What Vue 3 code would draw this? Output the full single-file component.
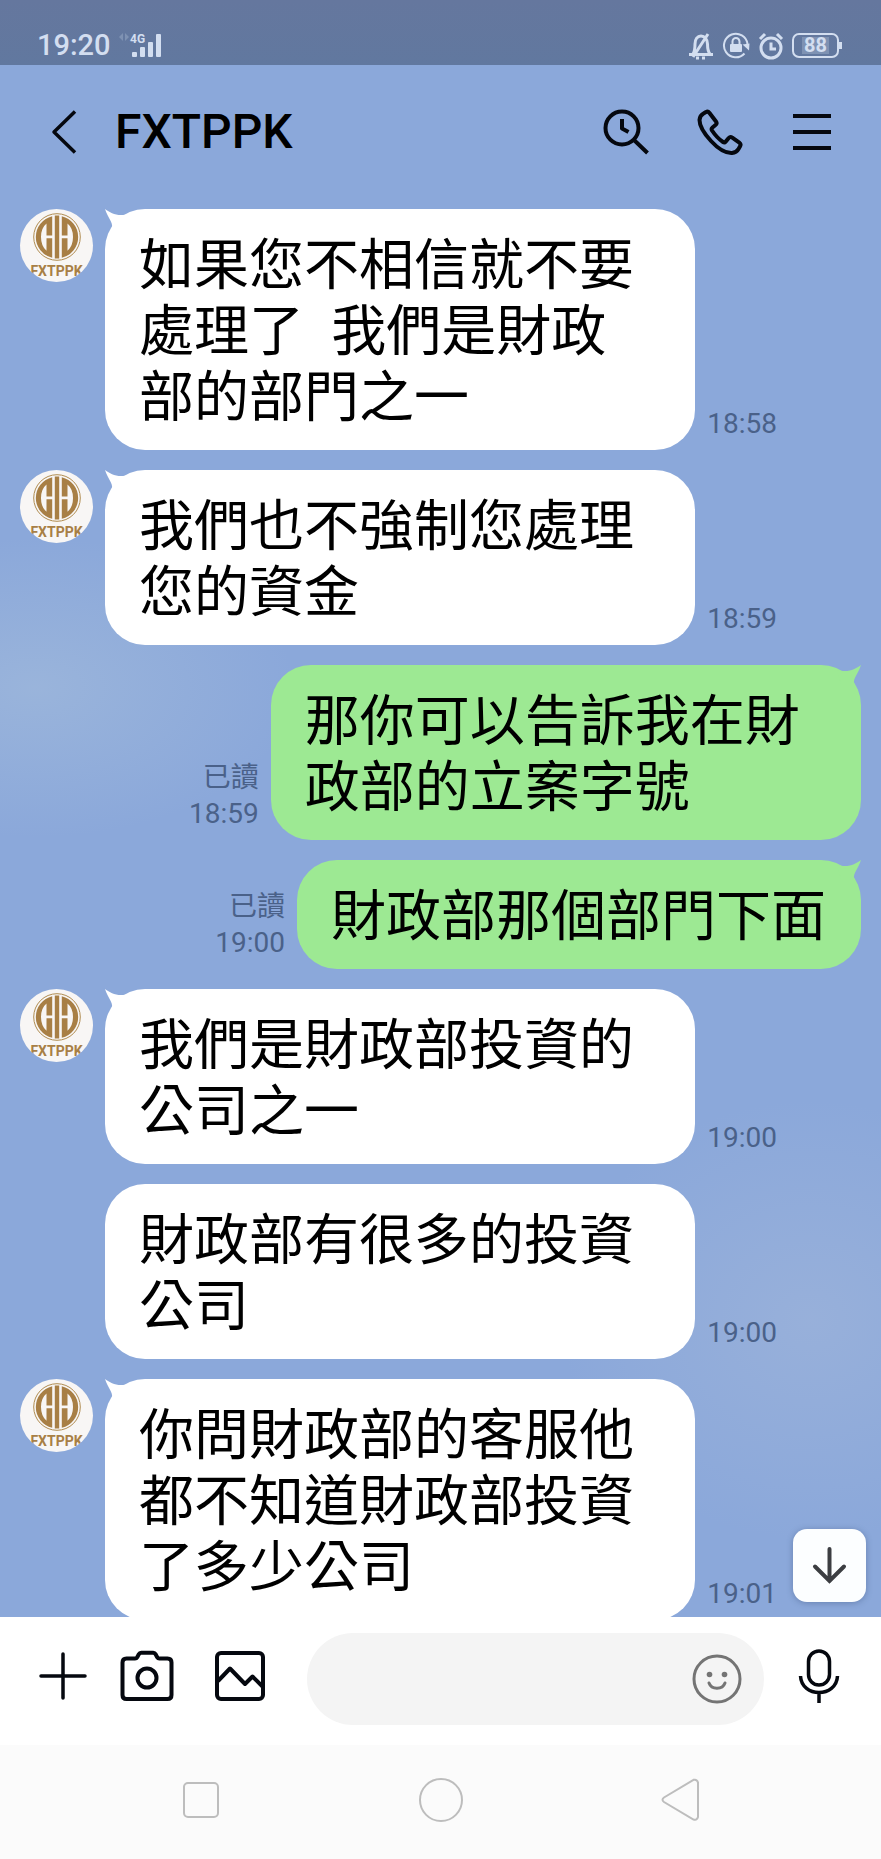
<script setup>
import { ref } from 'vue'

const draft = ref('')

const messages = [
  { id: 1, mine: false, first: true, text: '如果您不相信就不要處理了  我們是財政部的部門之一', time: '18:58' },
  { id: 2, mine: false, first: true, text: '我們也不強制您處理您的資金', time: '18:59' },
  { id: 3, mine: true, first: true, text: '那你可以告訴我在財政部的立案字號', time: '18:59' },
  { id: 4, mine: true, first: true, text: '財政部那個部門下面', time: '19:00' },
  { id: 5, mine: false, first: true, text: '我們是財政部投資的公司之一', time: '19:00' },
  { id: 6, mine: false, first: false, text: '財政部有很多的投資公司', time: '19:00' },
  { id: 7, mine: false, first: true, text: '你問財政部的客服他都不知道財政部投資了多少公司', time: '19:01' }
]
</script>

<template>
  <div class="phone">
    <div class="status">
      <span class="clock">19:20</span>
      <svg class="signal" width="48" height="30" viewBox="0 0 48 30">
        <g class="faint">
          <path d="M4 6l4-4v8zM10 2l4 4-4 4z" />
        </g>
        <text x="15" y="12">4G</text>
        <rect x="17" y="21" width="5" height="5" rx="1" />
        <rect x="25" y="16" width="5" height="10" rx="1" />
        <rect x="33" y="11" width="5" height="15" rx="1" />
        <rect x="41" y="3" width="5" height="23" rx="1" />
      </svg>
      <div class="status-icons">
        <svg width="26" height="28" viewBox="0 0 26 28">
          <path d="M1 22.500h24M5 22c2-3 2-6 2-10 0-5 2.500-8 6-8s6.500 3 6.500 8c0 4 0 7 2.500 10M20 2L5 25" stroke-width="3" />
          <path d="M8 26h3M14 26h3" stroke-width="3" />
        </svg>
        <svg width="28" height="28" viewBox="0 0 28 28">
          <path d="M22.500 21.500A11.800 11.800 0 1 1 25.500 12" />
          <path class="solid" d="M20.500 12.500l7-1-.5 7z" />
          <rect class="solid" x="8" y="12" width="12" height="8" rx="1" />
          <path d="M10.500 12v-2.500a3.500 3.500 0 0 1 7 0V12" />
        </svg>
        <svg width="26" height="28" viewBox="0 0 26 28">
          <circle cx="13" cy="16" r="10" stroke-width="3" />
          <path d="M13 10.500V17h5" stroke-width="3" />
          <path d="M2 7l5-5M24 7l-5-5" stroke-width="3" />
        </svg>
        <span class="battery"><span>88</span></span>
      </div>
    </div>

    <header class="header">
      <button class="icon-btn" aria-label="返回">
        <svg width="48" height="48" viewBox="0 0 48 48">
          <path d="M36 3.500L15 24l21 20.500" stroke-width="3.500" />
        </svg>
      </button>
      <h1>FXTPPK</h1>
      <button class="icon-btn" aria-label="搜尋">
        <svg width="48" height="48" viewBox="0 0 48 48">
          <circle cx="20" cy="20" r="16.500" stroke-width="4" />
          <path d="M20 11v9.500l6.500 3.500M32 32l13.500 13" stroke-width="4" />
        </svg>
      </button>
      <button class="icon-btn" aria-label="通話">
        <svg width="48" height="48" viewBox="0 0 48 48">
          <path
            d="M8.500 5.500L11 4q2-1 3.500 1l6.500 8.500q1.500 2-.5 3.500l-3 2.500q-1.500 1.200-.5 3 5 7.500 11 11.500 1.500 1 2.700-.4l3-3.600q1.600-1.700 3.600-.4l7 5q2 1.500.8 3.600l-1.600 2.800Q41.500 44.500 37 45 27.500 45.500 16 33 4.500 20.500 4.500 12q.3-4.500 4-6.500z"
            stroke-width="4"
          />
        </svg>
      </button>
      <button class="icon-btn" aria-label="選單">
        <svg width="48" height="48" viewBox="0 0 48 48">
          <path d="M5 8h38M5 24h38M5 40h38" stroke-width="4" />
        </svg>
      </button>
    </header>

    <main class="chat">
      <div class="list">
        <div
          v-for="m in messages"
          :key="m.id"
          class="row"
          :class="{ mine: m.mine }"
        >
          <div v-if="!m.mine" class="avatar-slot">
            <div v-if="m.first" class="avatar">
              <svg width="48" height="48" viewBox="-24 -24 48 48">
                <circle r="23.300" fill="none" stroke="#b08c50" stroke-width="1" />
                <rect x="-2.200" y="-21.500" width="4.400" height="43" />
                <path
                  fill-rule="evenodd"
                  d="M-4.800-20.800A21.400 21.400 0 0 0-4.800 20.800V1.200h-5.700v12.500Q-16 9-16 0t5.500-13.500V-1.500h5.700z"
                />
                <path
                  fill-rule="evenodd"
                  d="M4.800-20.800A21.400 21.400 0 0 1 4.800 20.800V1.200h5.700v12.500Q16 9 16 0t-5.500-13.500V-1.500h-5.700z"
                />
              </svg>
              <span>FXTPPK</span>
            </div>
          </div>
          <div class="bubble">
            <svg v-if="m.first" class="tail" width="24" height="20" viewBox="0 0 24 20">
              <path d="M0 0C6 4 12 8 24 5L20 19 7 19C8 13 3 9 0 0z" />
            </svg>
            <p>{{ m.text }}</p>
          </div>
          <div class="meta">
            <span v-if="m.mine">已讀</span>
            <time>{{ m.time }}</time>
          </div>
        </div>
      </div>
      <button class="to-bottom" aria-label="捲到最新訊息">
        <svg width="41" height="41" viewBox="0 0 41 41">
          <path d="M20.500 4v32M6 21.500L20.500 36 35 21.500" />
        </svg>
      </button>
    </main>

    <footer class="composer">
      <button class="icon-btn" aria-label="更多">
        <svg width="52" height="52" viewBox="0 0 52 52">
          <path d="M26 4v44M4 26h44" stroke-width="3.500" stroke-linecap="round" />
        </svg>
      </button>
      <button class="icon-btn" aria-label="相機">
        <svg width="56" height="56" viewBox="0 0 56 56">
          <path
            d="M7.500 10.500H16q1.500 0 2.200-1.300l1.600-3q.8-1.500 2.400-1.500h12q1.600 0 2.400 1.500l1.600 3q.7 1.300 2.200 1.300h8.100q4 0 4 4V47q0 4-4 4h-41q-4 0-4-4V14.500q0-4 4-4z"
            stroke-width="4"
          />
          <circle cx="28" cy="30" r="9.500" stroke-width="4" />
        </svg>
      </button>
      <button class="icon-btn" aria-label="相簿">
        <svg width="52" height="52" viewBox="0 0 52 52">
          <rect x="3" y="3" width="46" height="46" rx="4" stroke-width="4" />
          <path d="M4 31l12-12.500 15 15.500 7.500-7.500L49 37" stroke-width="4" />
        </svg>
      </button>
      <div class="field">
        <input v-model="draft" type="text" aria-label="輸入訊息" />
        <button aria-label="貼圖">
          <svg width="50" height="50" viewBox="0 0 50 50">
            <circle cx="25" cy="25" r="23" />
            <path d="M17 29c2.500 7 13.500 7 16 0" stroke-linecap="round" />
            <circle class="eye" cx="17.500" cy="20.500" r="2.800" />
            <circle class="eye" cx="32.500" cy="20.500" r="2.800" />
          </svg>
        </button>
      </div>
      <button class="icon-btn" aria-label="語音">
        <svg width="44" height="56" viewBox="0 0 44 56">
          <rect x="11.500" y="3" width="21" height="34" rx="10.500" stroke-width="3.500" />
          <path d="M3.500 28c1 22 36 22 37 0M22 45v10" stroke-width="3.500" />
        </svg>
      </button>
    </footer>

    <nav class="system">
      <button aria-label="最近">
        <svg width="44" height="44" viewBox="0 0 44 44"><rect x="4" y="5" width="34" height="34" rx="4" /></svg>
      </button>
      <button aria-label="主畫面">
        <svg width="44" height="44" viewBox="0 0 44 44"><circle cx="22" cy="22" r="21" /></svg>
      </button>
      <button aria-label="上一頁">
        <svg width="44" height="44" viewBox="0 0 44 44">
          <path d="M35.500 1.800L6 19.500q-3 2.200 0 4.500l29.500 17.500q3.500 1 4.500-2.500V4.500q-1-3.500-4.500-2.700z" />
        </svg>
      </button>
    </nav>
  </div>
</template>

<style>
body {
  margin: 0;
}
</style>

<style scoped>
.phone {
  display: flex;
  flex-direction: column;
  height: 100vh;
  color: #000;
  font-family: Roboto, "Noto Sans CJK TC", sans-serif;
  background:
    radial-gradient(ellipse 260px 150px at 4% 37%, rgba(168, 192, 220, 0.5), transparent),
    radial-gradient(ellipse 250px 220px at 92% 71%, rgba(164, 184, 218, 0.5), transparent),
    #8ba8da;
}

button {
  display: flex;
  align-items: center;
  justify-content: center;
  padding: 0;
  border: none;
  background: none;
  color: inherit;
  cursor: pointer;
}

svg {
  display: block;
  flex: none;
}

/* status bar */
.status {
  display: flex;
  align-items: center;
  height: 39px;
  padding: 26px 38px 0 37px;
  color: #d3def0;
  background: linear-gradient(#65779e, #61789f);
}

.clock {
  font-size: 29px;
  font-weight: 500;
  line-height: 39px;
}

.signal {
  margin-left: 4px;
  fill: currentColor;
}

.signal text {
  font-size: 12px;
  font-weight: 700;
}

.faint {
  opacity: 0.25;
}

.status-icons {
  display: flex;
  align-items: center;
  gap: 8px;
  margin-left: auto;
}

.status-icons svg {
  fill: none;
  stroke: currentColor;
  stroke-width: 2;
}

.status-icons .solid {
  fill: currentColor;
  stroke: none;
}

.battery {
  position: relative;
  display: flex;
  justify-content: center;
  margin-right: 4px;
  border: 2px solid currentColor;
  border-radius: 7px;
  padding: 2px 8px;
}

.battery::after {
  content: "";
  position: absolute;
  right: -5px;
  top: 7px;
  width: 3px;
  height: 7px;
  background: currentColor;
}

.battery span {
  padding: 0 2px;
  font-size: 20px;
  font-weight: 700;
  line-height: 17px;
  background: rgba(211, 222, 240, 0.25);
}

/* header */
.header {
  display: flex;
  align-items: center;
  height: 134px;
  padding: 0 23px 0 21px;
}

.header .icon-btn {
  width: 93px;
}

.header .icon-btn:first-child {
  width: 84px;
}

.header h1 {
  flex: 1;
  margin: 0 0 0 10px;
  font-size: 48px;
  font-weight: 500;
  line-height: 60px;
}

.icon-btn svg {
  fill: none;
  stroke: #05080f;
  stroke-linejoin: round;
}

/* messages */
.chat {
  position: relative;
  flex: 1;
  min-height: 0;
}

.list {
  display: flex;
  flex-direction: column;
  gap: 20px;
  height: 100%;
  box-sizing: border-box;
  padding: 10px 20px 0;
  overflow: auto;
  scrollbar-width: none;
}

.row {
  display: flex;
  flex: none;
  align-items: flex-end;
}

.row.mine {
  flex-direction: row-reverse;
}

.avatar-slot {
  flex: none;
  align-self: flex-start;
  width: 85px;
}

.avatar {
  display: flex;
  flex-direction: column;
  align-items: center;
  width: 73px;
  height: 73px;
  box-sizing: border-box;
  padding-top: 4px;
  overflow: hidden;
  border-radius: 50%;
  color: #a87f45;
  background: #f8f6f5;
}

.avatar svg {
  fill: currentColor;
}

.avatar span {
  font-size: 14px;
  font-weight: 700;
  line-height: 20px;
}

.bubble {
  position: relative;
  box-sizing: border-box;
  max-width: 67vw;
  padding: 23px 35px 20px 34px;
  border-radius: 40px;
  background: #fff;
}

.bubble p {
  margin: 0;
  font-size: 55px;
  line-height: 66px;
  white-space: pre-wrap;
}

.mine .bubble {
  background: #9de993;
}

.tail {
  position: absolute;
  top: 0;
  left: 0;
  fill: #fff;
}

.mine .tail {
  left: auto;
  right: 0;
  fill: #9de993;
  transform: scaleX(-1);
}

.meta {
  display: flex;
  flex-direction: column;
  align-items: flex-end;
  margin: 0 12px 8px;
  color: #4a6189;
  font-size: 28px;
  line-height: 36px;
}

.to-bottom {
  position: absolute;
  right: 15px;
  bottom: 15px;
  width: 73px;
  height: 73px;
  border-radius: 14px;
  background: #fcfeff;
  box-shadow: 0 1px 6px rgba(40, 60, 100, 0.35);
}

.to-bottom svg {
  fill: none;
  stroke: #3c3e42;
  stroke-width: 4;
  stroke-linecap: round;
}

/* input bar */
.composer {
  display: grid;
  grid-template-columns: 84px 84px 102px minmax(0, 1fr) 78px;
  padding: 16px 23px 20px 21px;
  background: #fff;
}

.composer .icon-btn {
  padding-bottom: 6px;
}

.field {
  display: flex;
  align-items: center;
  height: 92px;
  margin: 0 16px;
  padding: 0 22px 0 40px;
  box-sizing: border-box;
  border-radius: 46px;
  background: #f4f4f4;
}

.field input {
  flex: 1;
  min-width: 0;
  border: none;
  outline: none;
  background: none;
  font: inherit;
  font-size: 36px;
}

.field svg {
  fill: none;
  stroke: #747474;
  stroke-width: 3;
}

.field .eye {
  fill: #747474;
  stroke: none;
}

/* system navigation */
.system {
  display: flex;
  justify-content: center;
  gap: 195px;
  padding: 33px 0 37px;
  background: #fbfbfb;
}

.system svg {
  fill: none;
  stroke: #bdbdbd;
  stroke-width: 2;
}
</style>
